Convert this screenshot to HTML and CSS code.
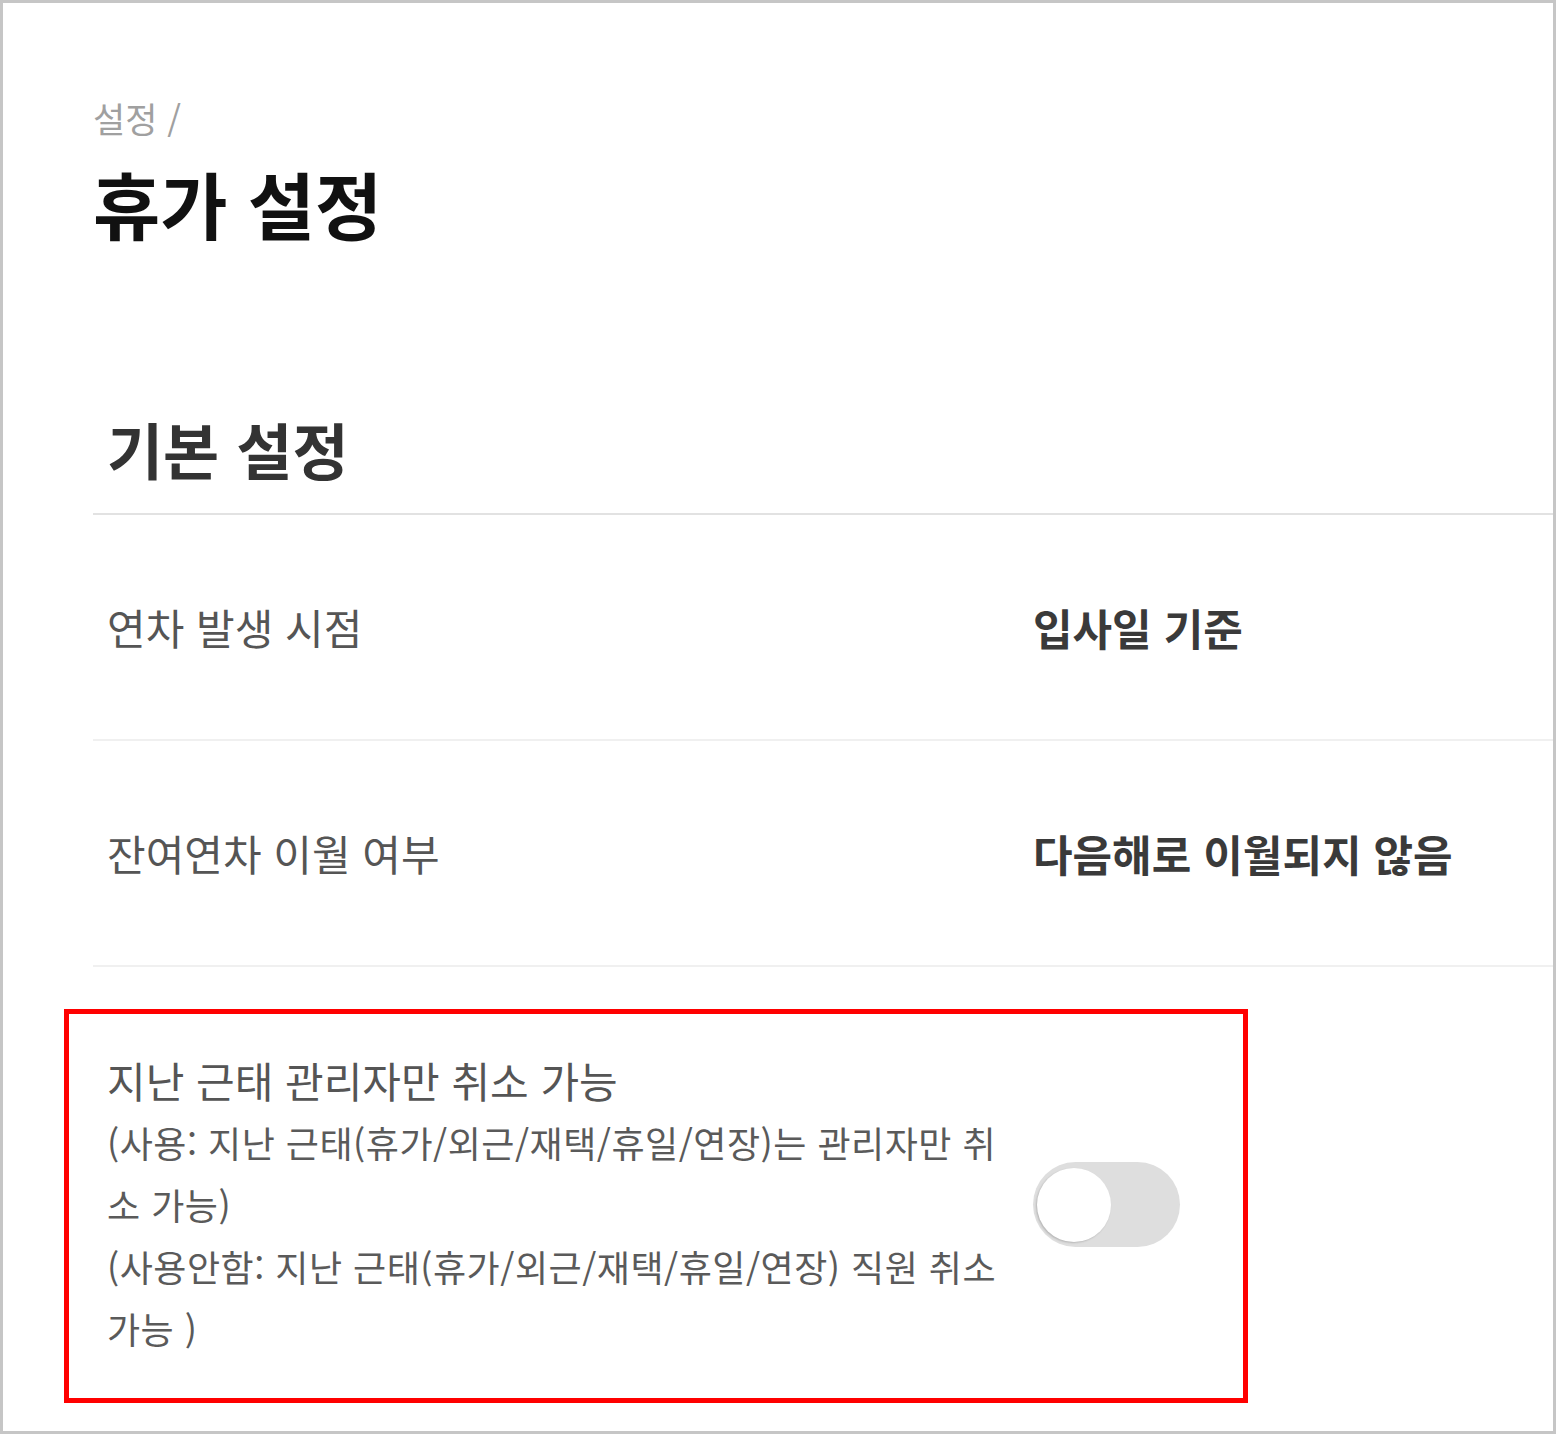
FILE: index.html
```html
<!DOCTYPE html>
<html lang="ko">
<head>
<meta charset="utf-8">
<title>휴가 설정</title>
<link rel="stylesheet" href="styles.css">
</head>
<body>
<div class="frame">
  <header class="page-head">
    <div class="breadcrumb">설정 /</div>
    <h1 class="page-title">휴가 설정</h1>
  </header>
  <section class="section">
    <h2 class="section-title">기본 설정</h2>
    <div class="row">
      <div class="label">연차 발생 시점</div>
      <div class="value">입사일 기준</div>
    </div>
    <div class="row">
      <div class="label">잔여연차 이월 여부</div>
      <div class="value">다음해로 이월되지 않음</div>
    </div>
    <div class="row row-toggle">
      <div class="label">
        <div class="label-title">지난 근태 관리자만 취소 가능</div>
        <div class="label-desc">(사용: 지난 근태(휴가/외근/재택/휴일/연장)는 관리자만 취소 가능)</div>
        <div class="label-desc">(사용안함: 지난 근태(휴가/외근/재택/휴일/연장) 직원 취소 가능 )</div>
      </div>
      <div class="value">
        <span class="toggle"><span class="knob"></span></span>
      </div>
      <div class="highlight"></div>
    </div>
  </section>
</div>
</body>
</html>
```

FILE: styles.css
```css
* { box-sizing: border-box; }
html, body { margin: 0; padding: 0; background: #fff; }
body {
  font-family: "Noto Sans CJK KR", "Noto Sans", sans-serif;
  width: 1558px;
  height: 1435px;
}
.frame {
  width: 1556px;
  height: 1434px;
  border: 3px solid #c6c6c6;
  padding: 95px 0 0 90px;
  overflow: hidden;
}
.breadcrumb {
  font-size: 35px;
  line-height: 40px;
  color: #a0a0a0;
}
.page-title {
  margin: 24px 0 0;
  font-size: 73px;
  line-height: 80px;
  font-weight: 700;
  color: #111;
}
.section { margin-top: 172px; }
.section-title {
  margin: 0;
  padding: 0 0 29px 14px;
  font-size: 61px;
  line-height: 70px;
  font-weight: 700;
  color: #333;
  border-bottom: 2px solid #e2e2e2;
}
.row {
  display: flex;
  align-items: center;
  height: 226px;
  border-bottom: 2px solid #f0f0f0;
}
.label {
  width: 940px;
  padding: 0 23px 0 14px;
  font-size: 42px;
  line-height: 48px;
  color: #555;
}
.value {
  font-size: 43px;
  line-height: 48px;
  font-weight: 700;
  color: #3a3a3a;
}
.row-toggle {
  position: relative;
  height: auto;
  border-bottom: none;
  padding: 82px 0 69px;
}
.label-title {
  line-height: 62px;
}
.label-desc {
  font-size: 36px;
  line-height: 62px;
  letter-spacing: 0.5px;
  color: #5a5a5a;
}
.toggle {
  display: block;
  width: 147px;
  height: 85px;
  border-radius: 43px;
  background: #dedede;
  padding: 6px 4px;
}
.knob {
  display: block;
  width: 74px;
  height: 74px;
  border-radius: 50%;
  background: #fff;
  box-shadow: -1px 1px 2px rgba(0,0,0,0.18);
}
.highlight {
  position: absolute;
  left: -29px;
  top: 42px;
  width: 1184px;
  height: 394px;
  border: 5px solid #ff0000;
  pointer-events: none;
}
```
